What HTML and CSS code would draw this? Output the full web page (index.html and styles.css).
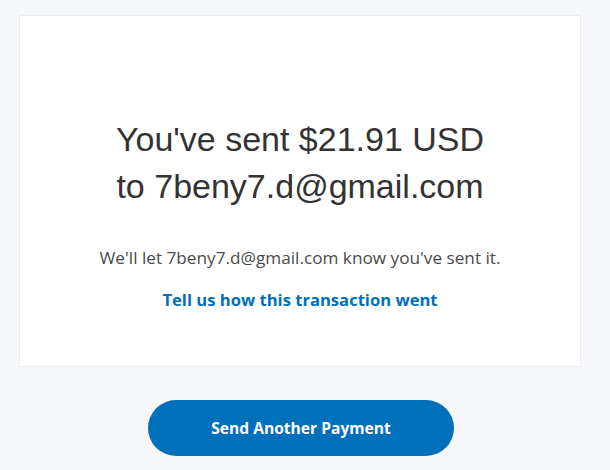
FILE: index.html
```html
<!DOCTYPE html>
<html>
<head>
<meta charset="utf-8">
<link rel="stylesheet" href="styles.css">
</head>
<body>
<main class="page">
  <section class="card">
    <h1 class="title">You've sent $21.91 USD<br>to 7beny7.d@gmail.com</h1>
    <p class="note">We'll let 7beny7.d@gmail.com know you've sent it.</p>
    <a class="feedback" href="#">Tell us how this transaction went</a>
  </section>
  <div class="actions">
    <button class="primary">Send Another Payment</button>
  </div>
</main>
</body>
</html>
```
FILE: styles.css
```css
html, body {
  margin: 0;
  padding: 0;
  background: #f5f7fa;
}
.page {
  padding: 15px 29px 0 19px;
  font-family: "Open Sans", "Noto Sans", sans-serif;
}
.card {
  box-sizing: border-box;
  height: 352px;
  background: #fff;
  border: 1px solid #eaeced;
  display: flex;
  flex-direction: column;
  align-items: center;
  padding-top: 100px;
}
.title {
  margin: 0;
  font-family: "Liberation Sans", Arial, sans-serif;
  font-weight: normal;
  font-size: 34px;
  line-height: 47px;
  color: #333;
  text-align: center;
}
.note {
  margin: 37px 0 0;
  font-size: 17.2px;
  line-height: 22px;
  color: #4a4a4a;
}
.feedback {
  margin-top: 20px;
  font-size: 16.6px;
  line-height: 22px;
  font-weight: bold;
  color: #0070ba;
  text-decoration: none;
}
.actions {
  display: flex;
  justify-content: center;
  padding-top: 33px;
  padding-left: 2px;
}
.primary {
  width: 306px;
  height: 56px;
  border: none;
  border-radius: 28px;
  background: #0070ba;
  color: #fff;
  font-family: "Open Sans", "Noto Sans", sans-serif;
  font-weight: bold;
  font-size: 15.6px;
  padding: 0;
}
```
